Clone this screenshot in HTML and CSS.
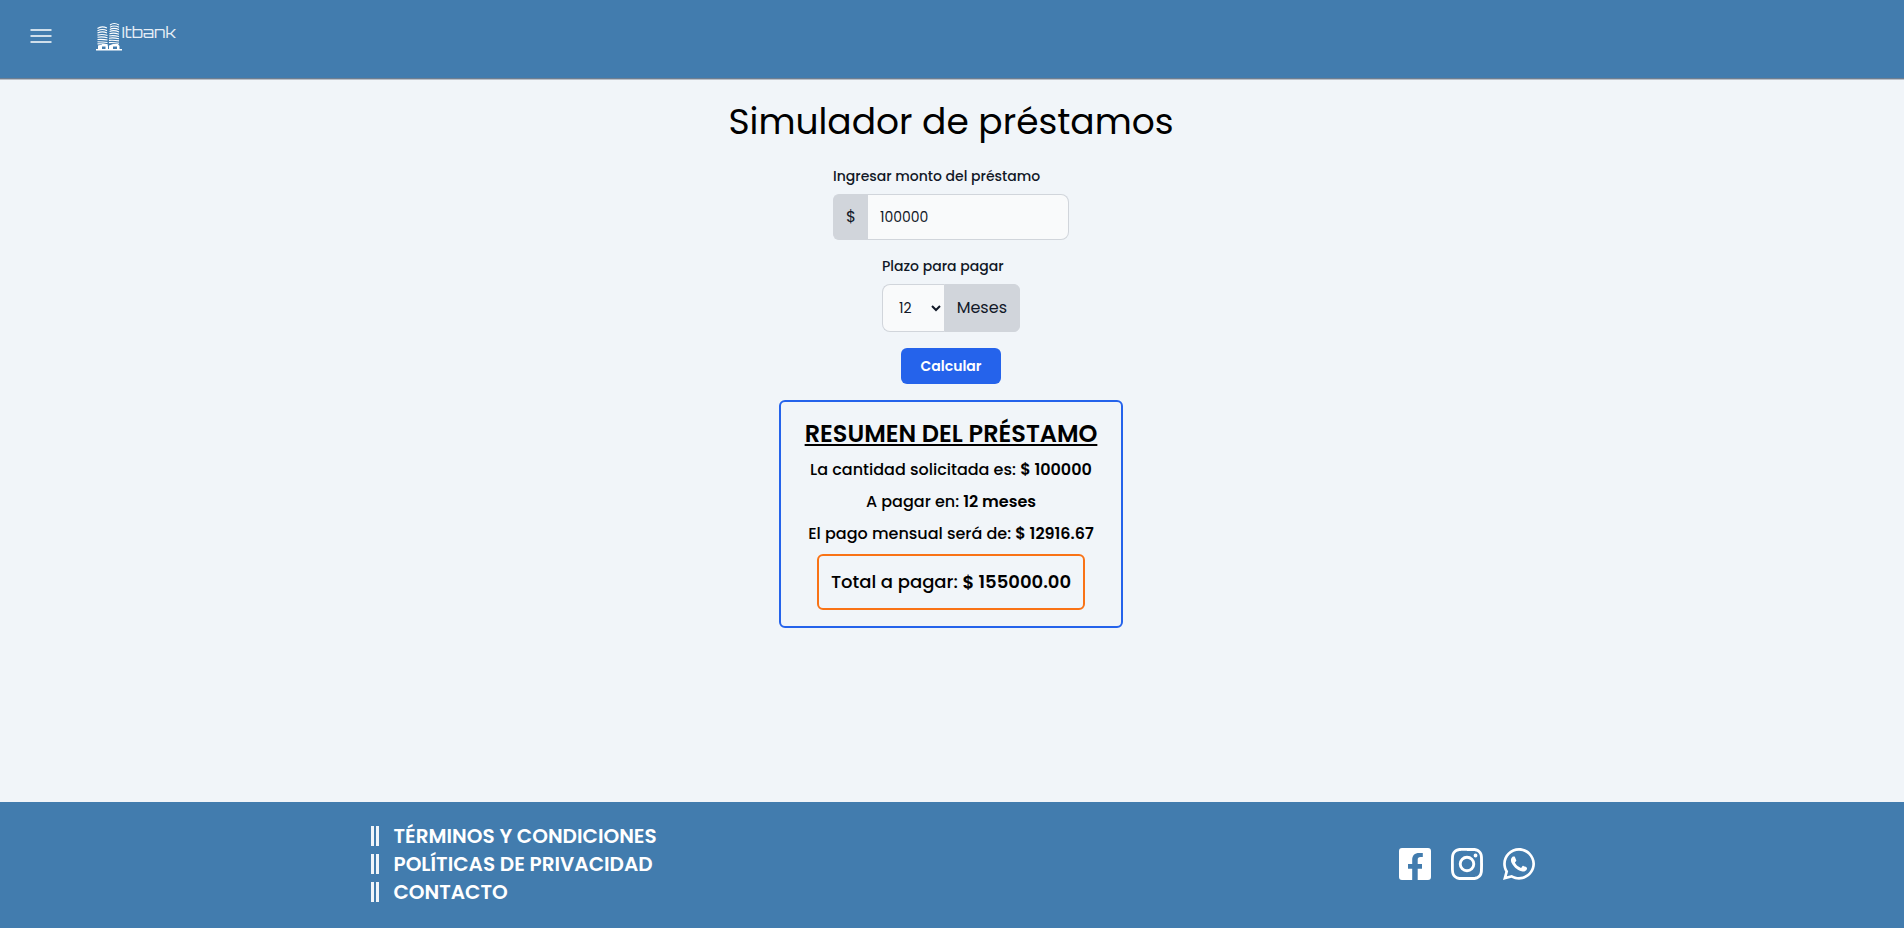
FILE: index.html
```html
<!DOCTYPE html>
<html lang="es">
<head>
<meta charset="utf-8">
<title>Itbank</title>
<link rel="stylesheet" href="styles.css">
</head>
<body>
<header class="header">
  <button class="menu" aria-label="Menú">
    <svg width="22" height="14" viewBox="0 0 22 14"><path d="M.5 1h21M.5 7h21M.5 13h21" stroke="#fff" stroke-width="1.700"/></svg>
  </button>
  <svg class="logo" width="82" height="32" viewBox="0 0 82 32">
    <g fill="none" stroke="#fff" stroke-width="1.100">
      <path d="M1.500 8.500q4-3 9.500-.5M1.500 10.700q5-2.500 9.500 0M1.500 12.900q5-2 9.500 0M1.500 15.100q5-1.500 10 .5M1.500 17.300q5-1 10 .5M1.500 19.500q5-.5 10 .5M1.500 21.700q5 0 10 .8M1.500 23.900q5-.5 10 .8"/>
      <path d="M14 5q4-3 9 0M14 7.200q4-2.500 9 0M13.800 9.400q4-2 9.200 0M13.600 11.600q4-2 9.400 .3M13.400 13.800q4-1.500 9.600 .4M13.200 16q4-1 9.800 .5M13 18.200q4-.8 10 .5M13 20.400q4-.5 10 .5M13 22.600q4-.3 10 .6"/>
    </g>
    <path fill="#fff" d="M0 29h26v1.400H0zM2 25.500l4-1v5H2zM6 24h5l1 2v3h-2.500v-2.500H6zM13 25.500l4-1.500v5h-4zM17 24h5l1.500 2v3H21v-2.500h-4z"/>
    <text class="logo-text" x="25.500" y="18.200" textLength="54.500" lengthAdjust="spacingAndGlyphs">Itbank</text>
  </svg>
</header>
<main class="main">
  <h1 class="title">Simulador de préstamos</h1>
  <form class="form">
    <div class="field">
      <label class="label" for="monto">Ingresar monto del préstamo</label>
      <div class="group group-amount">
        <span class="addon addon-left">$</span>
        <input class="input" id="monto" type="text" value="100000">
      </div>
    </div>
    <div class="field">
      <label class="label" for="plazo">Plazo para pagar</label>
      <div class="group group-term">
        <select class="select" id="plazo"><option>12</option></select>
        <span class="addon addon-right">Meses</span>
      </div>
    </div>
    <button class="submit" type="button">Calcular</button>
  </form>
  <section class="summary">
    <h2 class="summary-title">RESUMEN DEL PRÉSTAMO</h2>
    <p class="row">La cantidad solicitada es: <b>$ 100000</b></p>
    <p class="row">A pagar en: <b>12 meses</b></p>
    <p class="row">El pago mensual será de: <b>$ 12916.67</b></p>
    <p class="total">Total a pagar: <b>$ 155000.00</b></p>
  </section>
</main>
<footer class="footer">
  <ul class="links">
    <li>TÉRMINOS Y CONDICIONES</li>
    <li>POLÍTICAS DE PRIVACIDAD</li>
    <li>CONTACTO</li>
  </ul>
  <div class="social">
    <svg width="32" height="32" viewBox="0 0 32 32"><path fill="#fff" d="M3 0h26a3 3 0 0 1 3 3v26a3 3 0 0 1-3 3H18.700V20.700h4.300V16h-4.300v-4.200c0-1.800.8-2.800 2.800-2.800h2.300V5h-3.600C15.600 5 13.200 7.600 13.200 11.600V16H9v4.700h4.200V32H3a3 3 0 0 1-3-3V3a3 3 0 0 1 3-3z"/></svg>
    <svg width="32" height="32" viewBox="0 0 24 24"><path fill="#fff" d="M12 0C8.740 0 8.333.015 7.053.072 5.775.132 4.905.333 4.140.630c-.789.306-1.459.717-2.126 1.384S.935 3.350.630 4.140C.333 4.905.131 5.775.072 7.053.012 8.333 0 8.740 0 12s.015 3.667.072 4.947c.060 1.277.261 2.148.558 2.913.306.788.717 1.459 1.384 2.126.667.666 1.336 1.079 2.126 1.384.766.296 1.636.499 2.913.558C8.333 23.988 8.740 24 12 24s3.667-.015 4.947-.072c1.277-.060 2.148-.262 2.913-.558.788-.306 1.459-.718 2.126-1.384.666-.667 1.079-1.335 1.384-2.126.296-.765.499-1.636.558-2.913.060-1.280.072-1.687.072-4.947s-.015-3.667-.072-4.947c-.060-1.277-.262-2.149-.558-2.913-.306-.789-.718-1.459-1.384-2.126C21.319 1.347 20.651.935 19.860.630c-.765-.297-1.636-.499-2.913-.558C15.667.012 15.260 0 12 0zm0 2.160c3.203 0 3.585.016 4.850.071 1.170.055 1.805.249 2.227.415.562.217.960.477 1.382.896.419.420.679.819.896 1.381.164.422.360 1.057.413 2.227.057 1.266.070 1.646.070 4.850s-.015 3.585-.074 4.850c-.061 1.170-.256 1.805-.421 2.227-.224.562-.479.960-.899 1.382-.419.419-.824.679-1.380.896-.420.164-1.065.360-2.235.413-1.274.057-1.649.070-4.859.070-3.211 0-3.586-.015-4.859-.074-1.171-.061-1.816-.256-2.236-.421-.569-.224-.960-.479-1.379-.899-.421-.419-.690-.824-.900-1.380-.165-.420-.359-1.065-.420-2.235-.045-1.260-.061-1.649-.061-4.844 0-3.196.016-3.586.061-4.861.061-1.170.255-1.814.420-2.234.210-.570.479-.960.900-1.381.419-.419.810-.689 1.379-.898.420-.166 1.051-.361 2.221-.421 1.275-.045 1.650-.060 4.859-.060zM12 5.838a6.162 6.162 0 1 0 0 12.324 6.162 6.162 0 1 0 0-12.324zM12 16a4 4 0 1 1 0-8 4 4 0 0 1 0 8zm7.846-10.405a1.441 1.441 0 1 1-2.882 0 1.441 1.441 0 0 1 2.882 0z"/></svg>
    <svg width="32" height="32" viewBox="0 0 448 448"><path fill="#fff" d="M380.900 65.100C339 23.100 283.200 0 223.900 0 101.500 0 1.900 99.600 1.900 222c0 39.100 10.200 77.300 29.600 111L0 448l117.700-30.900c32.400 17.700 68.900 27 106.100 27h.1c122.300 0 224.100-99.600 224.100-222 0-59.300-25.200-115-67.100-157zM223.900 406.700c-33.200 0-65.700-8.900-94-25.700l-6.700-4-69.800 18.300L72 327.200l-4.400-7c-18.500-29.400-28.200-63.300-28.200-98.200 0-101.700 82.800-184.500 184.600-184.500 49.300 0 95.600 19.200 130.400 54.100 34.800 34.900 56.200 81.200 56.100 130.500 0 101.800-84.900 184.600-186.600 184.600zM325.100 268.500c-5.500-2.800-32.800-16.200-37.900-18-5.100-1.900-8.800-2.800-12.500 2.800-3.700 5.600-14.300 18-17.600 21.800-3.200 3.700-6.500 4.200-12 1.400-32.600-16.300-54-29.100-75.500-66-5.700-9.800 5.700-9.100 16.300-30.300 1.800-3.700.9-6.900-.5-9.700-1.400-2.800-12.500-30.100-17.100-41.200-4.500-10.800-9.100-9.300-12.500-9.500-3.200-.2-6.900-.2-10.600-.2-3.700 0-9.700 1.400-14.800 6.900-5.100 5.600-19.400 19-19.400 46.300 0 27.300 19.900 53.700 22.600 57.400 2.800 3.700 39.100 59.700 94.800 83.800 35.200 15.200 49 16.500 66.600 13.900 10.700-1.600 32.800-13.400 37.400-26.400 4.600-13 4.600-24.100 3.200-26.400-1.300-2.500-5-3.900-10.500-6.600z"/></svg>
  </div>
</footer>
</body>
</html>
```
FILE: styles.css
```css
* { box-sizing: border-box; }
body {
  margin: 0;
  min-height: 100vh;
  display: flex;
  flex-direction: column;
  background: #f1f5f9;
  color: #000;
  font-family: Poppins, "Inter", sans-serif;
  font-size: 16px;
  line-height: 24px;
}
h1, h2, p, ul { margin: 0; padding: 0; }
input, select, button { font-family: inherit; margin: 0; }

.header {
  height: 80px;
  padding: 20px 0 0 30px;
  display: flex;
  align-items: flex-start;
  gap: 44px;
  background: #427cae;
  border-bottom: 1px solid #b9bfc7;
  box-shadow: inset 0 -1px #6d7e91;
}
.menu {
  width: 22px;
  height: 32px;
  padding: 9px 0 0;
  display: flex;
  align-items: flex-start;
  background: none;
  border: 0;
}
.logo-text {
  font-family: Orbitron, Michroma, Jura, Inter, sans-serif;
  font-size: 16px;
  font-weight: 300;
  fill: #e6eef6;
}

.main {
  flex: 1;
  display: flex;
  flex-direction: column;
  align-items: center;
  padding: 22px 2px 0 0;
}
.title { font-size: 36px; line-height: 40px; font-weight: 400; }
.form {
  display: flex;
  flex-direction: column;
  align-items: center;
  gap: 16px;
  padding: 24px 0 16px;
}
.field { display: flex; flex-direction: column; gap: 8px; }
.label { font-size: 14px; line-height: 20px; font-weight: 500; color: #111827; }
.group { display: flex; }
.group-amount { width: 236px; height: 46px; }
.group-term { width: 138px; height: 48px; }
.addon {
  display: flex;
  align-items: center;
  padding: 0 12px;
  color: #111827;
  background: #d1d5db;
  border: 1px solid #d1d5db;
}
.addon-left { border-radius: 6px 0 0 6px; border-right: 0; }
.addon-right { border-radius: 0 6px 6px 0; }
.input, .select {
  min-width: 0;
  flex: 1;
  background-color: #f9fafb;
  border: 1px solid #d1d5db;
  color: #111827;
  font-size: 14px;
  line-height: 20px;
}
.input { padding: 10px 12px; border-left: 0; border-radius: 0 8px 8px 0; }
.select { padding: 10px 0 10px 12px; border-right: 0; border-radius: 8px 0 0 8px; }
.submit {
  width: 100px;
  height: 36px;
  border: 0;
  border-radius: 6px;
  background: #2563eb;
  color: #fff;
  font-size: 14px;
  line-height: 20px;
  font-weight: 600;
}

.summary {
  display: flex;
  flex-direction: column;
  align-items: center;
  gap: 8px;
  padding: 16px 24px;
  border: 2px solid #2563eb;
  border-radius: 6px;
}
.summary-title { font-size: 24px; line-height: 32px; font-weight: 600; text-decoration: underline; }
.row, .total { font-weight: 500; }
.row b, .total b { font-weight: 600; }
.total {
  padding: 12px;
  border: 2px solid #f97316;
  border-radius: 6px;
  font-size: 18px;
  line-height: 28px;
}

.footer {
  height: 126px;
  padding: 20px 369px 20px 371px;
  display: flex;
  justify-content: space-between;
  background: #427cae;
}
.links { list-style: none; color: #fff; font-size: 20px; line-height: 28px; font-weight: 600; }
.links li { display: flex; align-items: center; gap: 14.500px; }
.links li::before { content: ""; height: 20px; border-left: 8px double #f1f5f9; }
.social { display: flex; gap: 20px; padding-top: 26px; }
```
